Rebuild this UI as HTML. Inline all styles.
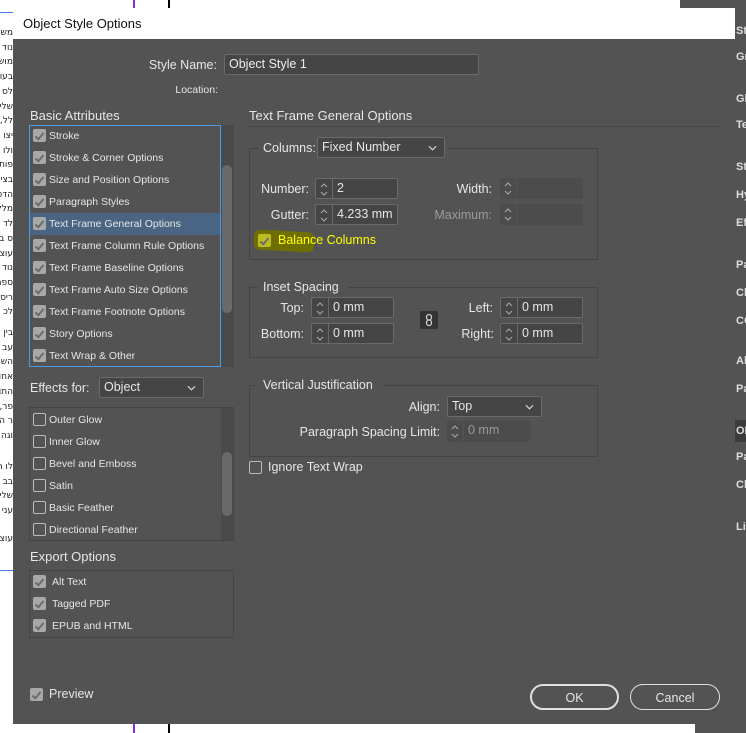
<!DOCTYPE html>
<html><head><meta charset="utf-8"><style>
*{box-sizing:border-box;margin:0;padding:0}
body{width:746px;height:733px;position:relative;overflow:hidden;background:#fff;font-family:"Liberation Sans","DejaVu Sans",sans-serif;color:#e6e6e6}
.a{position:absolute}
.dlg{left:13px;top:8px;width:722px;height:716px;background:#535353}
.title{left:13px;top:8px;width:722px;height:31px;background:#fff;color:#111;font-size:13px;padding:8px 0 0 10px}
.t11{font-size:10.5px}
.chk{width:13px;height:13px;border-radius:2px;background:#a8a8a8}
.chk:after{content:"";position:absolute;left:4px;top:1.5px;width:3px;height:7px;border:solid #6c6c6c;border-width:0 2px 2px 0;transform:rotate(40deg)}
.ub{width:13px;height:13px;border:1px solid #bcbcbc;border-radius:2px}
.box{border:1px solid #454545}
.inp{background:#454545;border:1px solid #6a6a6a;border-radius:2px;font-size:12.5px;padding:2px 0 0 4px;color:#eee}
.spin{background:#454545;border:1px solid #6a6a6a;border-radius:2px}
.spin .s{position:absolute;left:0;top:0;width:17px;height:100%;border-right:1px solid #6a6a6a}
.spin .s svg{position:absolute;left:3px;top:3px}
.spin .v{position:absolute;left:21px;top:2px;font-size:12.5px}
.dis{background:#4c4c4c;border:none}
.sel{background:#454545;border:1px solid #6a6a6a;border-radius:2px;font-size:12.5px;padding:2px 0 0 4px}
.sel svg{position:absolute;right:7px;top:7px}
.lbl{font-size:12.5px;text-align:right}
.btn{border:2px solid #e0e0e0;border-radius:13px;text-align:center;font-size:12.5px;padding-top:5px}
.heb{left:0;width:13px;font-size:9px;color:#222;line-height:14.7px;font-family:'DejaVu Sans',sans-serif;white-space:nowrap;direction:rtl;overflow:hidden}
.rp div{position:absolute;left:0}
</style></head><body>
<svg width="0" height="0" style="position:absolute"><defs>
<symbol id="sp" viewBox="0 0 10 15"><path d="M2 5 L5 2 L8 5 M2 10 L5 13 L8 10" fill="none" stroke="#aaa" stroke-width="1"/></symbol>
<symbol id="dn" viewBox="0 0 10 6"><path d="M1 1 L5 5 L9 1" fill="none" stroke="#ddd" stroke-width="1.2"/></symbol>
</defs></svg>
<div class="a" style="left:133px;top:0;width:2px;height:8px;background:#8a2be2"></div>
<div class="a" style="left:168px;top:0;width:2px;height:8px;background:#000"></div>
<div class="a" style="left:680px;top:0;width:66px;height:8px;background:#535353"></div>
<div class="a" style="left:735px;top:0;width:11px;height:733px;background:#535353"></div>
<div class="a" style="left:735px;top:420px;width:11px;height:22px;background:#3c3c3c"></div>
<div class="a" style="left:133px;top:724px;width:2px;height:9px;background:#8a2be2"></div>
<div class="a" style="left:168px;top:724px;width:2px;height:9px;background:#000"></div>
<div class="a" style="left:695px;top:724px;width:51px;height:9px;background:#535353"></div>
<div class="a" style="left:0;top:12px;width:13px;height:1px;background:#4a7ee0"></div>
<div class="a" style="left:0;top:570px;width:13px;height:1px;background:#4a7ee0"></div>
<div class="a heb" style="top:26px">משש<br>נוד<br>מוש<br>בעו<br>לס<br>שלי<br>לל,<br>יצו<br>ולו<br>פות<br>בצי<br>הדפ<br>מלל<br>לד<br>ס ב<br>עוצ<br>נוד<br>ספר<br>ריס<br>לכ</div>
<div class="a heb" style="top:326px">בין<br>עב<br>השו<br>אחו<br>התו<br>פר,<br>ר ה<br>וגה</div>
<div class="a heb" style="top:460px">לו ה<br>בב<br>שלי<br>עני</div>
<div class="a heb" style="top:532px">עוצ</div>
<div class="a rp" style="left:736px;top:26px;font-size:11px;font-weight:bold;color:#ddd;line-height:11px">
<div style="top:0">St</div><div style="top:26px">Gr</div><div style="top:68px">Gl</div><div style="top:94px">Te</div><div style="top:136px">St</div><div style="top:164px">Hy</div><div style="top:192px">Ef</div><div style="top:234px">Pa</div><div style="top:262px">Ch</div><div style="top:290px">CC</div><div style="top:330px">Al</div><div style="top:358px">Pa</div><div style="top:400px">OL</div><div style="top:426px">Pa</div><div style="top:454px">Ch</div><div style="top:496px">Lin</div></div>

<div class="a dlg"></div>
<div class="a title">Object Style Options</div>

<div class="a lbl" style="left:100px;top:58px;width:117px">Style Name:</div>
<div class="a inp" style="left:224px;top:54px;width:255px;height:21px">Object Style 1</div>
<div class="a t11" style="left:150px;top:84px;width:68px;text-align:right">Location:</div>

<div class="a" style="left:30px;top:108px;font-size:13px">Basic Attributes</div>
<div class="a" style="left:29px;top:125px;width:192px;height:242px;border:1px solid #4d9be6"></div>
<div class="a" style="left:221px;top:125px;width:13px;height:242px;background:#4a4a4a"></div>
<div class="a" style="left:222px;top:165px;width:10px;height:148px;background:#6a6a6a;border-radius:5px"></div>
<div class="a" style="left:30px;top:213px;width:190px;height:22px;background:#4a6583"></div>
<div class="a t11" style="left:33px;top:129px">
<div class="a chk" style="top:0"></div><div class="a" style="left:16px;top:1px;white-space:nowrap">Stroke</div>
<div class="a chk" style="top:22px"></div><div class="a" style="left:16px;top:23px;white-space:nowrap">Stroke &amp; Corner Options</div>
<div class="a chk" style="top:44px"></div><div class="a" style="left:16px;top:45px;white-space:nowrap">Size and Position Options</div>
<div class="a chk" style="top:66px"></div><div class="a" style="left:16px;top:67px;white-space:nowrap">Paragraph Styles</div>
<div class="a chk" style="top:88px"></div><div class="a" style="left:16px;top:89px;white-space:nowrap">Text Frame General Options</div>
<div class="a chk" style="top:110px"></div><div class="a" style="left:16px;top:111px;white-space:nowrap">Text Frame Column Rule Options</div>
<div class="a chk" style="top:132px"></div><div class="a" style="left:16px;top:133px;white-space:nowrap">Text Frame Baseline Options</div>
<div class="a chk" style="top:154px"></div><div class="a" style="left:16px;top:155px;white-space:nowrap">Text Frame Auto Size Options</div>
<div class="a chk" style="top:176px"></div><div class="a" style="left:16px;top:177px;white-space:nowrap">Text Frame Footnote Options</div>
<div class="a chk" style="top:198px"></div><div class="a" style="left:16px;top:199px;white-space:nowrap">Story Options</div>
<div class="a chk" style="top:220px"></div><div class="a" style="left:16px;top:221px;white-space:nowrap">Text Wrap &amp; Other</div>
</div>

<div class="a lbl" style="left:30px;top:381px;text-align:left">Effects for:</div>
<div class="a sel" style="left:99px;top:377px;width:105px;height:21px">Object<svg width="9" height="6"><use href="#dn"/></svg></div>
<div class="a box" style="left:29px;top:407px;width:205px;height:134px"></div>
<div class="a" style="left:221px;top:408px;width:12px;height:132px;background:#4a4a4a"></div>
<div class="a" style="left:222px;top:452px;width:10px;height:64px;background:#6a6a6a;border-radius:5px"></div>
<div class="a t11" style="left:33px;top:413px">
<div class="a ub" style="top:0"></div><div class="a" style="left:16px;top:1px;white-space:nowrap">Outer Glow</div>
<div class="a ub" style="top:22px"></div><div class="a" style="left:16px;top:23px;white-space:nowrap">Inner Glow</div>
<div class="a ub" style="top:44px"></div><div class="a" style="left:16px;top:45px;white-space:nowrap">Bevel and Emboss</div>
<div class="a ub" style="top:66px"></div><div class="a" style="left:16px;top:67px;white-space:nowrap">Satin</div>
<div class="a ub" style="top:88px"></div><div class="a" style="left:16px;top:89px;white-space:nowrap">Basic Feather</div>
<div class="a ub" style="top:110px"></div><div class="a" style="left:16px;top:111px;white-space:nowrap">Directional Feather</div>
</div>

<div class="a" style="left:30px;top:549px;font-size:13px">Export Options</div>
<div class="a box" style="left:29px;top:570px;width:205px;height:68px"></div>
<div class="a t11" style="left:33px;top:575px">
<div class="a chk" style="top:0"></div><div class="a" style="left:19px;top:1px;white-space:nowrap">Alt Text</div>
<div class="a chk" style="top:22px"></div><div class="a" style="left:19px;top:23px;white-space:nowrap">Tagged PDF</div>
<div class="a chk" style="top:44px"></div><div class="a" style="left:19px;top:45px;white-space:nowrap">EPUB and HTML</div>
</div>

<div class="a chk" style="left:30px;top:688px"></div>
<div class="a" style="left:49px;top:687px;font-size:12.5px">Preview</div>

<div class="a" style="left:249px;top:108px;font-size:13px">Text Frame General Options</div>
<div class="a" style="left:248px;top:126px;width:472px;height:1px;background:#484848"></div>

<div class="a box" style="left:249px;top:148px;width:349px;height:112px"></div>
<div class="a" style="left:258px;top:140px;width:190px;height:18px;background:#535353"></div>
<div class="a lbl" style="left:263px;top:141px;text-align:left">Columns:</div>
<div class="a sel" style="left:317px;top:137px;width:128px;height:21px">Fixed Number<svg width="9" height="6"><use href="#dn"/></svg></div>

<div class="a lbl" style="left:240px;top:182px;width:69px">Number:</div>
<div class="a spin" style="left:315px;top:178px;width:83px;height:21px"><div class="s"><svg width="10" height="15"><use href="#sp"/></svg></div><div class="v">2</div></div>
<div class="a lbl" style="left:240px;top:208px;width:69px">Gutter:</div>
<div class="a spin" style="left:315px;top:204px;width:83px;height:21px"><div class="s"><svg width="10" height="15"><use href="#sp"/></svg></div><div class="v">4.233 mm</div></div>
<div class="a lbl" style="left:400px;top:182px;width:92px">Width:</div>
<div class="a spin dis" style="left:500px;top:178px;width:83px;height:21px"><div class="s" style="border-color:#555"><svg width="10" height="15"><use href="#sp"/></svg></div></div>
<div class="a lbl" style="left:400px;top:208px;width:92px;color:#9a9a9a">Maximum:</div>
<div class="a spin dis" style="left:500px;top:204px;width:83px;height:21px"><div class="s" style="border-color:#555"><svg width="10" height="15"><use href="#sp"/></svg></div></div>

<div class="a" style="left:254px;top:231px;width:60px;height:20px;background:#6f6f00;border-radius:6px;transform:rotate(3deg)"></div>
<div class="a chk" style="left:258px;top:234px;background:#bdbd20"></div>
<div class="a" style="left:278px;top:233px;font-size:12.5px;color:#ffff00">Balance Columns</div>

<div class="a box" style="left:249px;top:287px;width:349px;height:71px"></div>
<div class="a" style="left:258px;top:280px;width:90px;height:14px;background:#535353"></div>
<div class="a lbl" style="left:263px;top:280px;text-align:left">Inset Spacing</div>
<div class="a lbl" style="left:240px;top:301px;width:64px">Top:</div>
<div class="a spin" style="left:311px;top:297px;width:83px;height:21px"><div class="s"><svg width="10" height="15"><use href="#sp"/></svg></div><div class="v">0 mm</div></div>
<div class="a lbl" style="left:240px;top:327px;width:64px">Bottom:</div>
<div class="a spin" style="left:311px;top:323px;width:83px;height:21px"><div class="s"><svg width="10" height="15"><use href="#sp"/></svg></div><div class="v">0 mm</div></div>
<div class="a" style="left:420px;top:311px;width:18px;height:18px;background:#333;border-radius:2px"><svg width="18" height="18"><rect x="6.5" y="3.5" width="5" height="5.5" rx="2.5" fill="none" stroke="#ccc" stroke-width="1.3"/><rect x="6.5" y="9" width="5" height="5.5" rx="2.5" fill="none" stroke="#ccc" stroke-width="1.3"/></svg></div>
<div class="a lbl" style="left:420px;top:301px;width:73px">Left:</div>
<div class="a spin" style="left:500px;top:297px;width:83px;height:21px"><div class="s"><svg width="10" height="15"><use href="#sp"/></svg></div><div class="v">0 mm</div></div>
<div class="a lbl" style="left:420px;top:327px;width:74px">Right:</div>
<div class="a spin" style="left:500px;top:323px;width:83px;height:21px"><div class="s"><svg width="10" height="15"><use href="#sp"/></svg></div><div class="v">0 mm</div></div>

<div class="a box" style="left:249px;top:385px;width:349px;height:72px"></div>
<div class="a" style="left:258px;top:378px;width:125px;height:14px;background:#535353"></div>
<div class="a lbl" style="left:263px;top:378px;text-align:left">Vertical Justification</div>
<div class="a lbl" style="left:380px;top:400px;width:60px">Align:</div>
<div class="a sel" style="left:447px;top:396px;width:95px;height:21px">Top<svg width="9" height="6"><use href="#dn"/></svg></div>
<div class="a lbl" style="left:280px;top:425px;width:160px">Paragraph Spacing Limit:</div>
<div class="a spin dis" style="left:447px;top:421px;width:83px;height:21px"><div class="s" style="border-color:#555"><svg width="10" height="15"><use href="#sp"/></svg></div><div class="v" style="color:#999">0 mm</div></div>

<div class="a ub" style="left:249px;top:461px"></div>
<div class="a" style="left:268px;top:460px;font-size:12.5px">Ignore Text Wrap</div>

<div class="a btn" style="left:530px;top:684px;width:89px;height:26px">OK</div>
<div class="a btn" style="left:630px;top:684px;width:90px;height:26px;border-width:1px;padding-top:6px">Cancel</div>
</body></html>
